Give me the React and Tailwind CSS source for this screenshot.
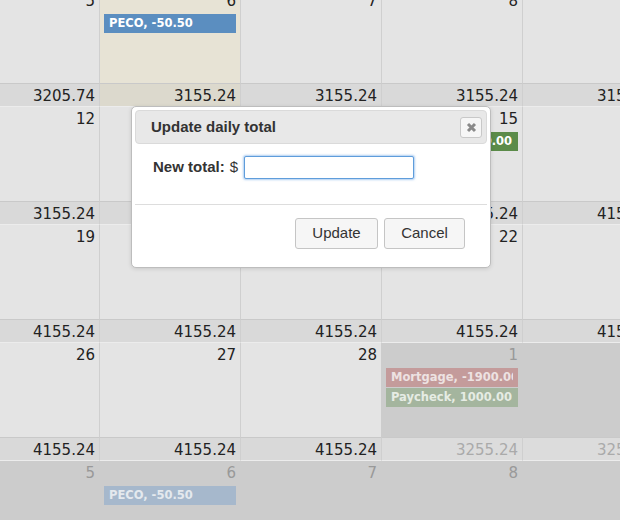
import React from 'react'

const evColors = {
  blue: 'bg-[#5b8ec0] text-white',
  green: 'bg-[#5b8b49] text-white',
  blueFaded: 'bg-[#a6b8cc] text-[#e4e9ee]',
  redFaded: 'bg-[#c49b9b] text-[#ede2e2]',
  greenFaded: 'bg-[#a4b59e] text-[#e6ece4]',
}

const weeks = [
  {
    days: [
      { d: 5 },
      { d: 6, today: true, events: [{ t: 'PECO, -50.50', c: 'blue' }] },
      { d: 7 },
      { d: 8 },
      { d: 9 },
    ],
    totals: ['3205.74', '3155.24', '3155.24', '3155.24', '3155.24'],
  },
  {
    days: [
      { d: 12 },
      { d: 13 },
      { d: 14 },
      { d: 15, events: [{ t: 'Paycheck, 1000.00', c: 'green' }] },
      { d: 16 },
    ],
    totals: ['3155.24', '3155.24', '3155.24', '4155.24', '4155.24'],
  },
  {
    days: [{ d: 19 }, { d: 20 }, { d: 21 }, { d: 22 }, { d: 23 }],
    totals: ['4155.24', '4155.24', '4155.24', '4155.24', '4155.24'],
  },
  {
    days: [
      { d: 26 },
      { d: 27 },
      { d: 28 },
      {
        d: 1,
        other: true,
        events: [
          { t: 'Mortgage, -1900.00', c: 'redFaded' },
          { t: 'Paycheck, 1000.00', c: 'greenFaded' },
        ],
      },
      { d: 2, other: true },
    ],
    totals: ['4155.24', '4155.24', '4155.24', '3255.24', '3255.24'],
    otherTotals: [3, 4],
  },
  {
    days: [
      { d: 5, other: true },
      { d: 6, other: true, events: [{ t: 'PECO, -50.50', c: 'blueFaded' }] },
      { d: 7, other: true },
      { d: 8, other: true },
      { d: 9, other: true },
    ],
    totals: ['3255.24', '3205.74', '3205.74', '3205.74', '3205.74'],
    otherTotals: [0, 1, 2, 3, 4],
  },
]

function Event({ ev }) {
  return (
    <div className={`mx-[4px] mb-[1px] h-[19px] px-[5px] text-[11.5px] font-bold leading-[19px] ${evColors[ev.c]}`}>
      <div className="overflow-hidden whitespace-nowrap">{ev.t}</div>
    </div>
  )
}

function DayCell({ day }) {
  let bg = 'bg-[#e4e4e4] border-l-[#cfcfcf] text-[#222]'
  if (day.today) bg = 'bg-[#e7e3d5] border-l-[#cfcfcf] text-[#222]'
  if (day.other) bg = 'bg-[#cccccc] border-l-[#cccccc] text-[#999]'
  return (
    <div className={`h-[95px] w-[141px] shrink-0 border-l border-t border-t-[#ececec] ${bg}`}>
      <div className="pr-[4px] pt-[3px] text-right leading-[18px]">{day.d}</div>
      <div className="mt-[4px]">
        {(day.events || []).map((ev, i) => (
          <Event key={i} ev={ev} />
        ))}
      </div>
    </div>
  )
}

function TotalCell({ value, today, other }) {
  let bg = 'bg-[#d9d9d9] text-[#222]'
  if (today) bg = 'bg-[#dcd9cd] text-[#222]'
  if (other) bg = 'bg-[#dcdcdc] text-[#aaa]'
  return (
    <div className={`h-[23px] w-[141px] shrink-0 border-l border-t border-l-[#cfcfcf] border-t-[#c9c9c9] pr-[4px] pt-[2px] text-right leading-[20px] ${bg}`}>
      {value}
    </div>
  )
}

function CloseIcon() {
  return (
    <svg width="11" height="11" viewBox="0 0 11 11">
      <path d="M2 2 L9 9 M9 2 L2 9" stroke="#8a8a8a" strokeWidth="3" strokeLinecap="butt" />
    </svg>
  )
}

export default function App() {
  return (
    <div className="relative h-[520px] w-[620px] overflow-hidden bg-[#cccccc]">
      <div className="-ml-[42px] -mt-[12px] font-['DejaVu_Sans',sans-serif] text-[15px]">
        {weeks.map((w, wi) => (
          <div key={wi}>
            <div className="flex">
              {w.days.map((day, i) => (
                <DayCell key={i} day={day} />
              ))}
            </div>
            <div className="flex">
              {w.totals.map((t, i) => (
                <TotalCell
                  key={i}
                  value={t}
                  today={w.days[i].today}
                  other={(w.otherTotals || []).includes(i)}
                />
              ))}
            </div>
          </div>
        ))}
      </div>

      <div className="absolute left-[131px] top-[106px] w-[360px] rounded-[5px] border border-[#bdbdbd] bg-white p-[3px] font-['Liberation_Sans',Arial,sans-serif] text-[15px] text-[#333] shadow-[0_1px_4px_rgba(0,0,0,0.12)]">
        <div className="flex h-[34px] items-center justify-between rounded-[4px] border border-[#dadada] bg-[#e8e8e8] pl-[15px] pr-[4px]">
          <span className="font-bold">Update daily total</span>
          <button className="flex h-[21px] w-[22px] items-center justify-center rounded-[3px] border border-[#c8c8c8] bg-[#f6f6f6]">
            <CloseIcon />
          </button>
        </div>
        <div className="flex items-center pb-[25px] pl-[18px] pt-[12px]">
          <span className="font-bold">New total:</span>
          <span className="ml-[5px]">$</span>
          <input
            defaultValue=""
            className="ml-[6px] h-[23px] w-[170px] rounded-[2px] border border-[#5f9ddb] bg-white outline-none shadow-[0_0_2px_1px_rgba(110,165,230,0.55)]"
          />
        </div>
        <div className="flex justify-end gap-[6px] border-t border-[#dddddd] pb-[15px] pr-[22px] pt-[13px]">
          <button className="h-[31px] w-[83px] rounded-[3px] border border-[#c5c5c5] bg-[#f6f6f6] text-[#333]">
            Update
          </button>
          <button className="h-[31px] w-[81px] rounded-[3px] border border-[#c5c5c5] bg-[#f6f6f6] text-[#333]">
            Cancel
          </button>
        </div>
      </div>
    </div>
  )
}
